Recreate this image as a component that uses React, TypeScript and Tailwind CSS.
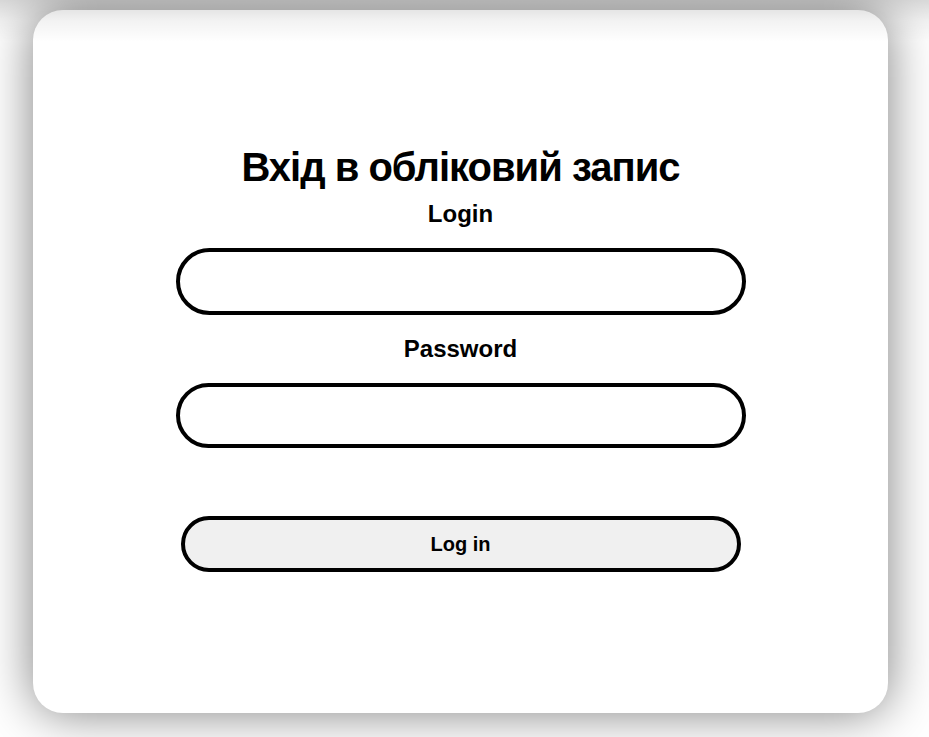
export default function App() {
  return (
    <div className="relative h-[737px] w-full overflow-hidden bg-white pt-[10px]">
      {/* card */}
      <div
        className="ml-[33px] flex h-[703px] w-[855px] flex-col items-center rounded-[30px] bg-white pt-[133px] shadow-[0_0_50px_rgba(0,0,0,0.5)]"
        style={{ fontFamily: '"Liberation Sans", Arial, "Noto Sans", sans-serif' }}
      >
        <h1 className="text-[40px] font-bold leading-[48px] tracking-[-1px] text-black">Вхід в обліковий запис</h1>
        <label className="mt-[9px] text-[24px] font-bold leading-[28px] text-black">Login</label>
        <input
          type="text"
          className="mt-[20px] h-[67px] w-[570px] rounded-full border-[4px] border-black bg-white px-6 text-xl outline-none"
        />
        <label className="mt-[20px] text-[24px] font-bold leading-[28px] text-black">Password</label>
        <input
          type="password"
          className="mt-[20px] h-[65px] w-[570px] rounded-full border-[4px] border-black bg-white px-6 text-xl outline-none"
        />
        <button className="mt-[68px] h-[56px] w-[560px] rounded-full border-[4px] border-black bg-[#f0f0f0] text-[20px] font-bold text-black">
          Log in
        </button>
      </div>

      {/* shadow cast from above the viewport */}
      <div className="pointer-events-none absolute inset-x-0 top-0 h-[42px] bg-gradient-to-b from-black/15 via-black/5 to-transparent" />
    </div>
  );
}
